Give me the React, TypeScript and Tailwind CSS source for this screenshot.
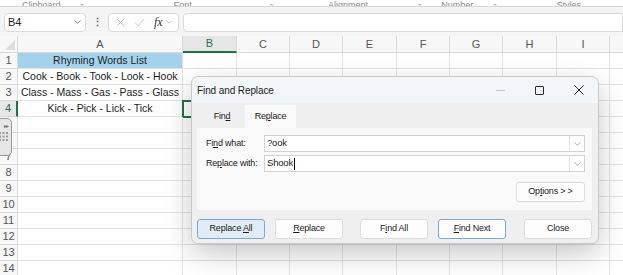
import React from "react"

const cols = ["A", "B", "C", "D", "E", "F", "G", "H", "I", "J"]

const rows: Record<number, string> = {
  1: "Rhyming Words List",
  2: "Cook - Book - Took - Look - Hook",
  3: "Class - Mass - Gas - Pass - Glass",
  4: "Kick - Pick - Lick - Tick",
}

function Chevron({ className = "" }: { className?: string }) {
  return (
    <svg viewBox="0 0 10 6" className={className} fill="none" stroke="currentColor" strokeWidth="1.1">
      <path d="M1 1l4 4 4-4" strokeLinecap="round" strokeLinejoin="round" />
    </svg>
  )
}

function Combo({ value, caret }: { value: string; caret?: boolean }) {
  return (
    <div className="flex h-[17px] w-[321px] shrink-0 items-center border border-[#d2d2d2] bg-white">
      <div className="flex flex-1 items-center pl-[2px] text-[9.5px] text-[#1b1b1b]">
        {value}
        {caret && <span className="ml-[1px] h-[12px] w-px bg-black" />}
      </div>
      <div className="flex h-full w-[15px] items-center justify-center border-l border-[#e4e4e4] text-[#8a8a8a]">
        <Chevron className="h-[4px] w-[7px]" />
      </div>
    </div>
  )
}

function Btn({ children, className = "" }: { children: React.ReactNode; className?: string }) {
  return (
    <div className={`flex h-[20px] w-[68px] items-center justify-center rounded-[3px] border text-[9px] tracking-[-0.2px] text-[#1b1b1b] ${className}`}>
      <span className="whitespace-nowrap">{children}</span>
    </div>
  )
}

export default function App() {
  return (
    <div className="relative h-[275px] w-[623px] overflow-hidden bg-white font-['Liberation_Sans',Arial,sans-serif]">
      {/* ribbon remnant */}
      <div className="flex h-[7px] items-end overflow-hidden border-b border-[#d6d6d6] bg-white text-[9px] leading-[9px] text-[#888] shadow-[0_1px_2px_rgba(0,0,0,0.08)]">
        <div className="-mb-[4px] flex whitespace-nowrap">
          <span className="ml-[22px]">Clipboard</span>
          <span className="ml-[20px]">▫</span>
          <span className="ml-[90px]">Font</span>
          <span className="ml-[78px]">▫</span>
          <span className="ml-[55px]">Alignment</span>
          <span className="ml-[50px]">▫</span>
          <span className="ml-[20px]">Number</span>
          <span className="ml-[20px]">▫</span>
          <span className="ml-[60px]">Styles</span>
        </div>
      </div>

      {/* formula bar */}
      <div className="flex h-[29px] items-center gap-[4px] bg-[#f4f4f4] pl-[4px] pt-[1px]">
        <div className="flex h-[19px] w-[82px] items-center justify-between rounded-[4px] border border-[#dadada] bg-white pl-[3px] pr-[4px] text-[11px] text-[#222]">
          B4
          <Chevron className="h-[4px] w-[7px] text-[#444]" />
        </div>
        <div className="w-[14px] text-center text-[11px] font-bold leading-none text-[#666]">⋮</div>
        <div className="flex h-[19px] w-[71px] items-center rounded-[4px] border border-[#dadada] bg-white pl-[7px] text-[#bdbdbd]">
          <svg viewBox="0 0 10 10" className="h-[9px] w-[9px]" fill="none" stroke="currentColor" strokeWidth="1">
            <path d="M1 1l8 8M9 1l-8 8" />
          </svg>
          <svg viewBox="0 0 12 10" className="ml-[9px] h-[9px] w-[11px]" fill="none" stroke="currentColor" strokeWidth="1">
            <path d="M1 5l3.5 4L11 1" />
          </svg>
          <span className="ml-[9px] font-['Liberation_Serif',serif] text-[12px] italic text-[#333]">fx</span>
          <Chevron className="ml-[3px] h-[4px] w-[6px] text-[#999]" />
        </div>
        <div className="h-[19px] flex-1 rounded-l-[4px] border border-[#dadada] bg-white" />
      </div>

      {/* sheet grid */}
      <div className="grid grid-cols-[18px_165px_54px_53px_53px_54px_53px_53px_54px_53px_40px] grid-rows-[17px_repeat(14,16px)] text-[10.5px]">
        <div className="relative border-b border-r border-[#d9d9d9] bg-[#f7f7f7]">
          <svg viewBox="0 0 10 10" className="absolute bottom-[2px] right-[2px] h-[10px] w-[10px]">
            <path d="M10 0v10H0z" fill="#dcdcdc" />
          </svg>
        </div>
        {cols.map(c => (
          <div
            key={c}
            className={
              c === "B"
                ? "flex items-center justify-center border-b-2 border-r border-b-[#217346] border-r-[#d9d9d9] bg-[#e6e6e6] text-[11px] text-[#217346]"
                : "flex items-center justify-center border-b border-r border-[#d9d9d9] bg-[#f7f7f7] text-[11px] text-[#555]"
            }
          >
            {c}
          </div>
        ))}
        {Array.from({ length: 14 }, (_, i) => i + 1).map(r => (
          <React.Fragment key={r}>
            <div
              className={
                r === 4
                  ? "flex items-center justify-center border-b border-r-2 border-b-[#d9d9d9] border-r-[#217346] bg-[#e6e6e6] text-[11px] text-[#217346]"
                  : "flex items-center justify-center border-b border-r border-[#d9d9d9] bg-[#f7f7f7] text-[11px] text-[#555]"
              }
            >
              {r}
            </div>
            {cols.map(c => (
              <div
                key={c}
                className={`flex items-center justify-center whitespace-nowrap border-b border-r border-[#e3e3e3] text-[#1d1d1d] ${
                  c === "A" && r === 1 ? "bg-[#a3d3ec]" : ""
                } ${c === "B" && r === 4 ? "outline-2 -outline-offset-1 outline-[#217346]" : ""}`}
              >
                {c === "A" ? rows[r] ?? "" : ""}
              </div>
            ))}
          </React.Fragment>
        ))}
      </div>

      {/* floating sheet-nav widget */}
      <div className="absolute left-[-6px] top-[118px] flex h-[38px] w-[18px] flex-col items-end gap-[3px] rounded-[5px] border border-[#9a9a9a] bg-[#e6e6e6] pr-[3px] pt-[4px] text-[#777]">
        <span className="text-[6px] leading-none tracking-[-1px]">▸▸</span>
        <svg viewBox="0 0 9 9" className="h-[9px] w-[9px]" fill="#999">
          <rect x="0" y="0" width="2" height="2" /><rect x="3.5" y="0" width="2" height="2" /><rect x="7" y="0" width="2" height="2" />
          <rect x="0" y="3.5" width="2" height="2" /><rect x="3.5" y="3.5" width="2" height="2" /><rect x="7" y="3.5" width="2" height="2" />
          <rect x="0" y="7" width="2" height="2" /><rect x="3.5" y="7" width="2" height="2" /><rect x="7" y="7" width="2" height="2" />
        </svg>
      </div>

      {/* Find and Replace dialog */}
      <div className="absolute left-[191px] top-[76px] flex h-[168px] w-[408px] flex-col rounded-[7px] border border-[#c9c9c9] bg-[#efefef] shadow-[0_10px_28px_rgba(0,0,0,0.22)]">
        <div className="flex h-[26px] items-center justify-between rounded-t-[7px] bg-[#f3f6f9] pl-[5px]">
          <span className="text-[10px] tracking-[-0.1px] text-[#1b1b1b]">Find and Replace</span>
          <div className="flex h-full">
            <div className="flex w-[39px] items-center justify-center">
              <div className="h-px w-[9px] bg-[#c4c4c4]" />
            </div>
            <div className="flex w-[39px] items-center justify-center">
              <div className="h-[9px] w-[9px] rounded-[1px] border border-[#2b2b2b]" />
            </div>
            <div className="flex w-[39px] items-center justify-center">
              <svg viewBox="0 0 10 10" className="h-[10px] w-[10px]" fill="none" stroke="#2b2b2b" strokeWidth="1">
                <path d="M0.5 0.5l9 9M9.5 0.5l-9 9" />
              </svg>
            </div>
          </div>
        </div>

        <div className="flex h-[25px] items-end pl-[7px] text-[9px] tracking-[-0.2px] text-[#1b1b1b]">
          <div className="flex h-[23px] w-[46px] items-center justify-center">
            <span>Fin<u className="underline-offset-1">d</u></span>
          </div>
          <div className="flex h-[23px] w-[51px] items-center justify-center bg-[#f9f9f9]">
            <span>Re<u className="underline-offset-1">p</u>lace</span>
          </div>
        </div>

        <div className="ml-[5px] mr-[6px] flex h-[82px] flex-col bg-[#f9f9f9] pl-[9px] pr-[7px] pt-[7px] text-[9px] tracking-[-0.2px] text-[#1b1b1b]">
          <div className="flex items-center justify-between">
            <span className="whitespace-nowrap">Fi<u className="underline-offset-1">n</u>d what:</span>
            <Combo value="?ook" />
          </div>
          <div className="mt-[3px] flex items-center justify-between">
            <span className="whitespace-nowrap">Re<u className="underline-offset-1">p</u>lace with:</span>
            <Combo value="Shook" caret />
          </div>
          <div className="mt-[10px] flex justify-end">
            <Btn className="h-[19px] w-[69px] border-[#dcdcdc] bg-[#fdfdfd]">
              Op<u className="underline-offset-1">t</u>ions &gt; &gt;
            </Btn>
          </div>
        </div>

        <div className="mt-[9px] flex pl-[5px]">
          <Btn className="border-[#7ba7d4] bg-[#e1ecf7]">
            Replace <u className="underline-offset-1">A</u>ll
          </Btn>
          <Btn className="ml-[10px] border-[#dcdcdc] bg-[#fdfdfd]">
            <u className="underline-offset-1">R</u>eplace
          </Btn>
          <Btn className="ml-[17px] border-[#dcdcdc] bg-[#fdfdfd]">
            F<u className="underline-offset-1">i</u>nd All
          </Btn>
          <Btn className="ml-[10px] border-[#7ba7d4] bg-[#fdfdfd]">
            <u className="underline-offset-1">F</u>ind Next
          </Btn>
          <Btn className="ml-[18px] border-[#dcdcdc] bg-[#fdfdfd]">Close</Btn>
        </div>
      </div>
    </div>
  )
}
